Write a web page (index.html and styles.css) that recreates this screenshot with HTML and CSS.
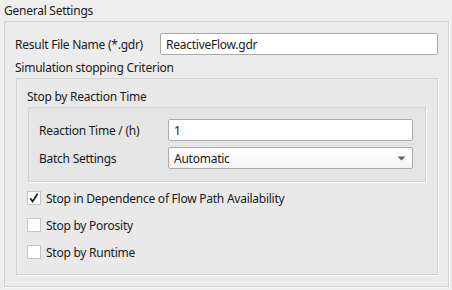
FILE: index.html
```html
<!DOCTYPE html>
<html>
<head>
<meta charset="utf-8">
<link rel="stylesheet" href="styles.css">
</head>
<body>
<div class="page">
  <div class="legend legend-top">General Settings</div>
  <div class="group g1">
    <div class="row row-result">
      <span class="label">Result File Name (*.gdr)</span>
      <div class="field">ReactiveFlow.gdr</div>
    </div>
    <div class="legend legend-sim">Simulation stopping Criterion</div>
    <div class="group g2">
      <div class="legend legend-react">Stop by Reaction Time</div>
      <div class="group g3">
        <div class="row row-inner">
          <span class="label">Reaction Time / (h)</span>
          <div class="field">1</div>
        </div>
        <div class="row row-inner">
          <span class="label">Batch Settings</span>
          <div class="field combo">Automatic
            <svg class="arrow" width="9" height="5" viewBox="0 0 9 5"><path d="M0.5 0.5 H8.5 L4.5 4.5 Z" fill="#606060"/></svg>
          </div>
        </div>
      </div>
      <div class="checks">
        <div class="check">
          <span class="box"><svg width="12" height="12" viewBox="0 0 12 12"><path d="M2.2 6.2 L4.6 9.4 L9.6 1.8" fill="none" stroke="#1a1a1a" stroke-width="1.7"/></svg></span>
          <span class="clabel">Stop in Dependence of Flow Path Availability</span>
        </div>
        <div class="check">
          <span class="box"></span>
          <span class="clabel">Stop by Porosity</span>
        </div>
        <div class="check">
          <span class="box"></span>
          <span class="clabel">Stop by Runtime</span>
        </div>
      </div>
    </div>
  </div>
</div>
</body>
</html>
```
FILE: styles.css
```css
html, body {
  margin: 0;
  padding: 0;
  background: #eeeeef;
}
body {
  font-family: "Noto Sans", "Open Sans", sans-serif;
  font-size: 12px;
  letter-spacing: -0.25px;
  color: #1a1a1a;
  width: 452px;
  height: 290px;
  overflow: hidden;
}
.page {
  padding: 0 0 0 4px;
}
.legend {
  white-space: nowrap;
}
.legend-top {
  height: 21px;
  line-height: 21px;
}
.group {
  border: 1px solid #d3d3d4;
  box-shadow: 1px 1px 0 #f8f8f9;
  box-sizing: border-box;
}
.g1 {
  width: 445px;
  height: 266px;
  background: #ececed;
  padding: 11px 10px 0 10px;
}
.row {
  display: flex;
  align-items: center;
}
.row-result {
  height: 22px;
}
.row-result .label {
  width: 145px;
}
.field {
  flex: 1;
  box-sizing: border-box;
  height: 100%;
  background: #ffffff;
  border: 1px solid #ababab;
  border-radius: 2px;
  padding: 0 5px;
  display: flex;
  align-items: center;
  position: relative;
}
.legend-sim {
  height: 23px;
  line-height: 25px;
}
.g2 {
  margin-left: 1px;
  height: 197px;
  background: #e9e9ea;
  padding: 6px 11px 0 10px;
}
.legend-react {
  height: 22px;
  line-height: 23px;
}
.g3 {
  margin-left: 1px;
  height: 75px;
  background: #e5e5e6;
  padding: 11px 12px 0 10px;
  display: flex;
  flex-direction: column;
  gap: 6px;
}
.row-inner {
  height: 22px;
}
.row-inner .label {
  width: 129px;
}
.combo {
  background: linear-gradient(#ffffff, #f4f4f4);
}
.arrow {
  position: absolute;
  right: 6px;
  top: 8px;
}
.checks {
  display: flex;
  flex-direction: column;
  gap: 13px;
  padding-top: 9px;
}
.check {
  display: flex;
  align-items: center;
  height: 14px;
}
.box {
  width: 14px;
  height: 14px;
  box-sizing: border-box;
  border: 1px solid #c4c4c4;
  background: #ffffff;
  display: flex;
  align-items: center;
  justify-content: center;
  margin-right: 5px;
}
.clabel {
  white-space: nowrap;
}
```
